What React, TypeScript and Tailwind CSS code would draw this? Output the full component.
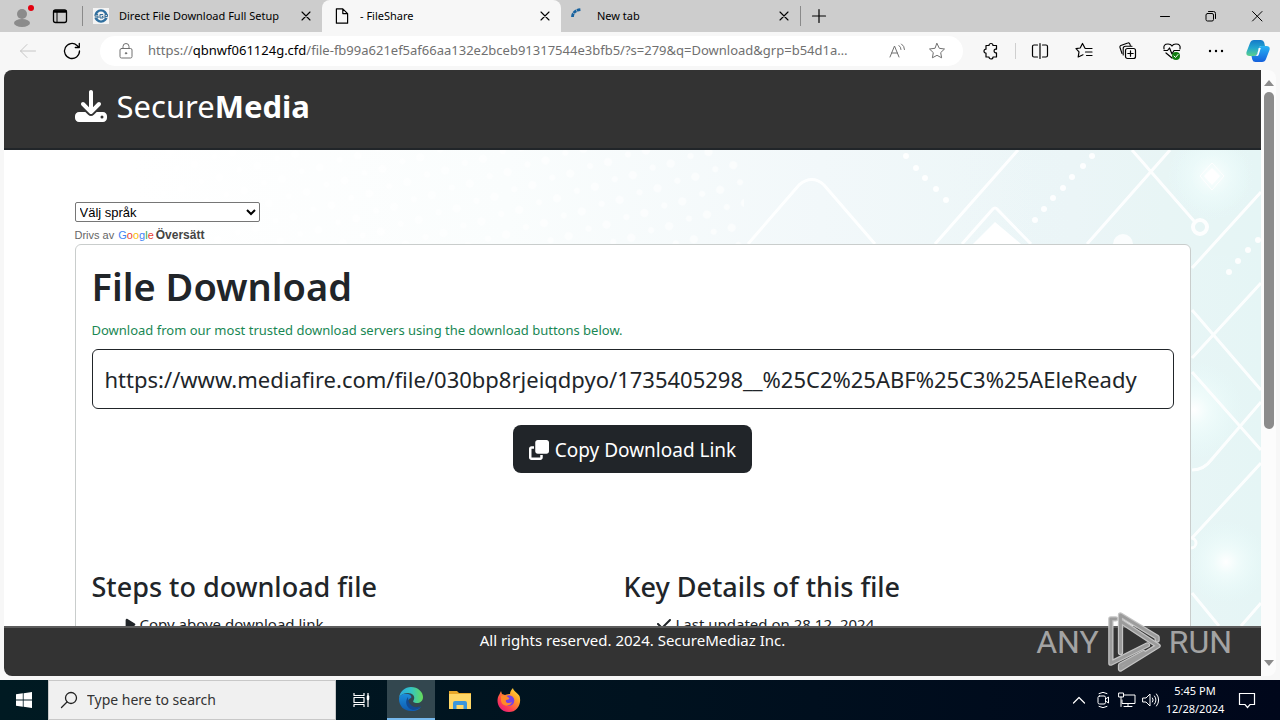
import { useState, type ReactNode } from "react";
import { FaCheck, FaClone, FaDownload, FaPlay } from "react-icons/fa6";

const FILE_URL =
  "https://www.mediafire.com/file/030bp8rjeiqdpyo/1735405298__%25C2%25ABF%25C3%25AEleReady";

const ADDRESS = {
  scheme: "https://",
  host: "qbnwf061124g.cfd",
  path: "/file-fb99a621ef5af66aa132e2bceb91317544e3bfb5/?s=279&q=Download&grp=b54d1a7c92",
};

type IconProps = { children: ReactNode; className?: string };

function Icon({ children, className = "size-5" }: IconProps) {
  return (
    <svg
      viewBox="0 0 20 20"
      fill="none"
      stroke="currentColor"
      strokeLinecap="round"
      strokeLinejoin="round"
      className={`shrink-0 ${className}`}
      aria-hidden="true"
    >
      {children}
    </svg>
  );
}

const STAR = "M10 2.5l2.3 4.8 5.2.7-3.8 3.6.9 5.2-4.6-2.5-4.6 2.5.9-5.2L2.5 8l5.2-.7z";

function CloseIcon() {
  return (
    <Icon className="size-4">
      <path d="M5 5l10 10M15 5L5 15" strokeWidth="1.4" />
    </Icon>
  );
}

function Tab({
  title,
  icon,
  active = false,
}: {
  title: string;
  icon: ReactNode;
  active?: boolean;
}) {
  return (
    <div
      className={
        active
          ? "flex h-8 w-[239px] items-center rounded-t-lg bg-[#f7f7f7] pl-3 pr-2"
          : "flex h-8 w-[239px] items-center pl-2.5 pr-2"
      }
    >
      <span className="flex w-[26px] shrink-0 items-center">{icon}</span>
      <span className="min-w-0 flex-1 truncate text-[11px]">{title}</span>
      <button type="button" aria-label={`Close ${title}`}>
        <CloseIcon />
      </button>
    </div>
  );
}

function TabStrip() {
  return (
    <div className="flex h-8 shrink-0 items-center bg-[#cdcdcd]">
      <button type="button" aria-label="Profile" className="ml-3">
        <svg viewBox="0 0 24 24" className="size-6">
          <circle cx="10" cy="10" r="5" fill="#8b8b8b" />
          <ellipse cx="10" cy="19" rx="8" ry="4" fill="#8b8b8b" />
          <circle cx="19" cy="4" r="3" fill="#e3000f" />
        </svg>
      </button>
      <button type="button" aria-label="Tab actions" className="ml-3.5">
        <Icon>
          <rect x="3.5" y="4" width="13" height="12.5" rx="2" strokeWidth="1.3" />
          <path d="M4.5 5.5h11" strokeWidth="2.6" />
          <path d="M7 6v10" />
        </Icon>
      </button>
      <div className="ml-3 h-5 w-px bg-[#8a8a8a]" />
      <div className="flex">
        <Tab
          title="Direct File Download Full Setup"
          icon={
            <svg viewBox="0 0 16 16" className="size-4">
              <rect width="16" height="16" fill="#f4f4f4" />
              <circle cx="8" cy="8" r="5.6" fill="none" stroke="#2f6f9f" strokeWidth="2.4" />
              <path d="M1 6.500h14v3.500h-14z" fill="#d9dde0" />
              <path
                d="M5 6.500H2v1.600h3V10H2M10 6.500H7V10h3V8.500H9M12 10V6.500h2.500v2H12"
                fill="none"
                stroke="#37709a"
              />
            </svg>
          }
        />
        <Tab
          active
          title="- FileShare"
          icon={
            <Icon className="size-4">
              <path d="M3 1h8l6 6v12H3zM11 1v6h6" strokeWidth="1.5" />
            </Icon>
          }
        />
        <Tab
          title="New tab"
          icon={
            <svg viewBox="0 0 16 16" className="size-4" fill="none" stroke="#17629f">
              <path d="M1.500 9C1.500 5 4.500 1.800 10 1.500" strokeWidth="2.800" strokeDasharray="3.600 .6" />
            </svg>
          }
        />
      </div>
      <div className="h-5 w-px bg-[#8a8a8a]" />
      <button type="button" aria-label="New tab" className="ml-2">
        <Icon>
          <path d="M10 3.500v13M3.500 10h13" strokeWidth="1.200" />
        </Icon>
      </button>
      <div className="ml-auto flex text-black">
        <button type="button" aria-label="Minimize" className="flex w-[46px] justify-center">
          <Icon>
            <path d="M5.500 10.500h9" />
          </Icon>
        </button>
        <button type="button" aria-label="Restore" className="flex w-[46px] justify-center">
          <Icon>
            <rect x="5" y="7.500" width="7.500" height="7.500" rx="1.500" />
            <path d="M7.500 5.500h5a2 2 0 0 1 2 2v5" />
          </Icon>
        </button>
        <button type="button" aria-label="Close window" className="flex w-[46px] justify-center">
          <Icon>
            <path d="M5.500 5.500l9.500 9.500M15 5.500L5.500 15" />
          </Icon>
        </button>
      </div>
    </div>
  );
}

function AddressBar() {
  const [editing, setEditing] = useState(false);

  return (
    <div className="ml-[18px] flex h-[30px] min-w-0 flex-1 items-center rounded-full bg-white px-4 text-[#707070]">
      <Icon>
        <rect x="4" y="7.500" width="12" height="9.500" rx="1.500" />
        <path d="M7 7.500V5.500a3 3 0 0 1 6 0v2" />
        <circle cx="10" cy="12.300" r=".7" fill="currentColor" />
      </Icon>
      {editing ? (
        <input
          autoFocus
          aria-label="Address"
          defaultValue={ADDRESS.scheme + ADDRESS.host + ADDRESS.path}
          onBlur={() => setEditing(false)}
          className="ml-3 min-w-0 flex-1 text-[13px] text-black outline-none"
        />
      ) : (
        <button
          type="button"
          aria-label="Edit address"
          onClick={() => setEditing(true)}
          className="ml-3 mr-5 min-w-0 flex-1 truncate text-left text-[13px]"
        >
          {ADDRESS.scheme}
          <span className="text-black">{ADDRESS.host}</span>
          {ADDRESS.path}
        </button>
      )}
      <button type="button" aria-label="Read aloud" className="ml-4">
        <Icon>
          <path d="M3 16L7.500 5 12 16M4.600 12h5.800M12 4.500q2 1.500 2 4M14.500 3q3 2 3 5.500" />
        </Icon>
      </button>
      <button type="button" aria-label="Add to favorites" className="ml-5">
        <Icon>
          <path d={STAR} />
        </Icon>
      </button>
    </div>
  );
}

function Toolbar() {
  return (
    <div className="flex h-[38px] shrink-0 items-center bg-[#f7f7f7] pl-[18px] pr-2.5">
      <button type="button" aria-label="Back" disabled className="text-[#c6c6c6]">
        <Icon>
          <path d="M17.500 10h-15M9 3.500L2.500 10 9 16.500" />
        </Icon>
      </button>
      <button type="button" aria-label="Refresh" className="ml-6">
        <Icon>
          <path d="M17.500 10A7.500 7.500 0 1 1 15 4.400L17 6.500M17.300 2.500v4h-4" strokeWidth="1.300" />
        </Icon>
      </button>
      <AddressBar />
      <div className="ml-[18px] flex items-center">
        <button type="button" aria-label="Extensions">
          <Icon>
            <path
              d="M5 4.500h3a2 2 0 1 1 4 0h3.500v3.700h-1a1.900 1.900 0 0 0 0 3.700h1V16H12a2 2 0 1 1-4 0H5v-3.800a2 2 0 1 1 0-4z"
              strokeWidth="1.200"
            />
          </Icon>
        </button>
        <div className="mx-3.5 h-4 w-px bg-[#cfcfcf]" />
        <button type="button" aria-label="Split screen">
          <Icon>
            <path d="M7.500 4H4a1.500 1.500 0 0 0-1.500 1.500v9A1.500 1.500 0 0 0 4 16h3.500M12.500 4H16a1.500 1.500 0 0 1 1.500 1.500v9A1.500 1.500 0 0 1 16 16h-3.500M10 2.500v15" strokeWidth="1.200" />
          </Icon>
        </button>
        <button type="button" aria-label="Favorites" className="ml-6">
          <Icon>
            <path
              d="M11 7.200L8.500 2.500 6.200 7 2 7.600l3 3.200-.8 5.200L9 13.800M11.500 7.500H18M11.500 11H18M12.500 14.500H18"
              strokeWidth="1.200"
            />
          </Icon>
        </button>
        <button type="button" aria-label="Collections" className="ml-6">
          <Icon>
            <path d="M4 12.500L2 6.500a1.500 1.500 0 0 1 .8-2l7-2.500a1.500 1.500 0 0 1 2 .9l.5 1.600" strokeWidth="1.100" />
            <rect x="7.500" y="7.500" width="10" height="10" rx="2" strokeWidth="1.200" />
            <path d="M12.500 9.800v5.400M9.800 12.500h5.400" strokeWidth="1.200" />
            <path d="M5.200 14V7.500q0-2.300 2.300-2.300H14" strokeWidth="1.100" />
          </Icon>
        </button>
        <button type="button" aria-label="Browser essentials" className="ml-6">
          <Icon>
            <path d="M2 8q-1-5 4-5 3 0 4 2 1-2 4-2 5 0 4 5M2 9.500h3.500L7.500 7l2.500 6 2-3.500h5.500M4 12l6 5" strokeWidth="1.200" />
            <circle cx="14" cy="15" r="4" fill="#107c10" stroke="none" />
            <path d="M12 15l1.500 1.500 2.500-3" stroke="#fff" />
          </Icon>
        </button>
        <button type="button" aria-label="Settings and more" className="ml-6">
          <Icon>
            <path d="M4 10h.01M10 10h.01M16 10h.01" strokeWidth="2.400" />
          </Icon>
        </button>
        <button type="button" aria-label="Copilot" className="ml-5">
          <svg viewBox="0 0 24 24" className="size-6">
            <defs>
              <linearGradient id="pilotA" x1="0" y1="0" x2="0" y2="1">
                <stop offset="0" stopColor="#1479c9" />
                <stop offset=".5" stopColor="#23a6cf" />
                <stop offset="1" stopColor="#5bd08b" />
              </linearGradient>
              <linearGradient id="pilotB" x1="0" y1="0" x2="0" y2="1">
                <stop offset="0" stopColor="#28b4f4" />
                <stop offset="1" stopColor="#1560dc" />
              </linearGradient>
            </defs>
            <path d="M8 1h7q2.500 0 3.200 2.500L19 7h-3.500q-2 0-2.600 2l-1.600 5.500Q10.300 17 8 17H3.500Q-.3 17 .5 13L4 4q1-3 4-3z" fill="url(#pilotA)" />
            <path d="M16 23H9.500Q7 23 6.300 20.500L5.500 17H8q2.500 0 3.200-2.500L12.900 9q.6-2 2.600-2h5q4 0 3 4l-3.500 9q-1 3-4 3z" fill="url(#pilotB)" />
            <path d="M12.800 9h2l-2 6.500q-.5 1.500-2 1.500h-1q1.200-.8 1.500-2z" fill="#fff" />
          </svg>
        </button>
      </div>
    </div>
  );
}

const TRAIL_DOTS = [
  [902, 6], [912, 18], [921, 28], [932, 39], [942, 50],
  [1088, 6], [1079, 16], [1068, 27], [1059, 38], [1049, 48], [1040, 59], [1031, 70],
  [1254, 90], [1244, 100], [1234, 111], [1225, 122],
];

function Backdrop() {
  return (
    <svg
      viewBox="0 0 1257 476"
      preserveAspectRatio="xMaxYMin slice"
      className="absolute inset-0 size-full"
      aria-hidden="true"
    >
      <defs>
        <linearGradient id="wash">
          <stop offset=".1" stopColor="#ffffff" />
          <stop offset=".4" stopColor="#fafdfd" />
          <stop offset=".65" stopColor="#f2f8fa" />
          <stop offset=".85" stopColor="#ebf6f7" />
          <stop offset="1" stopColor="#e5f5f5" />
        </linearGradient>
        <radialGradient id="glow">
          <stop offset="0" stopColor="#ffffff" />
          <stop offset=".3" stopColor="#f2fdfc" stopOpacity=".8" />
          <stop offset="1" stopColor="#e6fbfa" stopOpacity="0" />
        </radialGradient>
        <pattern id="specks" width="28" height="28" patternUnits="userSpaceOnUse" patternTransform="rotate(28)">
          <circle cx="7" cy="7" r="4" fill="#fff" />
          <circle cx="21" cy="19" r="3" fill="#fff" />
        </pattern>
      </defs>
      <rect width="1257" height="476" fill="url(#wash)" />
      <rect x="150" width="590" height="100" fill="url(#specks)" opacity=".6" />
      <circle cx="1208" cy="26" r="45" fill="url(#glow)" />
      <circle cx="1190" cy="260" r="50" fill="url(#glow)" />
      <circle cx="1222" cy="412" r="42" fill="url(#glow)" />
      <g fill="none" stroke="#fff" strokeWidth="3" opacity=".9">
        <path d="M744 94L795 35Q808 24 820 35L871 94" />
        <path d="M1014 0L931 94M1166 0L1083 94M1128 0L1190 71" />
        <path d="M958 94L988 60Q991 56 994 60L1027 94" />
        <path d="M1257 42L1188 118M1257 133L1188 208M1188 160L1257 240" />
        <path d="M1188 222L1257 300M1257 252L1208 309Q1200 320 1188 320" />
        <path d="M1257 313L1188 388M1188 443L1215 476M1257 453L1237 476" />
        <circle cx="1196" cy="77" r="7" strokeWidth="4" />
        <circle cx="1187" cy="393" r="5" />
      </g>
      <path d="M969 94L991 72L1017 94z" fill="#fff" />
      <path d="M1208 13L1220 26L1208 40L1196 26z" fill="none" stroke="#fff" />
      <path d="M1208 18L1216 26L1208 35L1200 26z" fill="#fff" />
      <circle cx="1119" cy="94" r="10" fill="#fff" opacity=".8" />
      {TRAIL_DOTS.map(([x, y]) => (
        <circle key={`${x}-${y}`} cx={x} cy={y} r="3" fill="#fff" opacity=".9" />
      ))}
    </svg>
  );
}

function FileCard() {
  return (
    <div className="rounded-md border border-[#c9cdcc] bg-white px-4 pt-4">
      <h1 className="text-[38px]/[50px] font-semibold">File Download</h1>
      <p className="mt-2 text-[13px]/[22px] text-[#198754]">
        Download from our most trusted download servers using the download buttons below.
      </p>
      <input
        readOnly
        aria-label="Download link"
        value={FILE_URL}
        className="mt-2 h-[60px] w-full rounded-md border border-[#212529] px-3 text-[22px] outline-none"
      />
      <div className="mt-4 flex justify-center">
        <button
          type="button"
          onClick={() => navigator.clipboard.writeText(FILE_URL)}
          className="flex h-12 items-center gap-1.5 rounded-lg bg-[#212529] px-4 pt-0.5 text-[19px] text-white"
        >
          <FaClone className="size-5" />
          Copy Download Link
        </button>
      </div>
      <div className="mr-[18px] mt-[97px] grid grid-cols-2">
        <section>
          <h2 className="text-[27px]/[34px] font-medium">Steps to download file</h2>
          <ul className="mt-2 pl-8 text-[15px]/6">
            <li className="flex items-center gap-[3px]">
              <FaPlay className="size-[13px]" />
              Copy above download link
            </li>
          </ul>
        </section>
        <section>
          <h2 className="text-[27px]/[34px] font-medium">Key Details of this file</h2>
          <ul className="mt-2 pl-8 text-[15px]/6">
            <li className="flex items-center gap-1">
              <FaCheck className="size-4" />
              Last updated on 28.12. 2024
            </li>
          </ul>
        </section>
      </div>
    </div>
  );
}

function Page() {
  return (
    <div className="flex min-w-0 flex-1 flex-col text-[#212529]">
      <header className="h-20 shrink-0 border-b-2 border-[#212529] bg-[#333]">
        <div className="mx-auto max-w-[1140px] px-3 pt-3">
          <a href="#" className="flex h-12 w-fit items-center gap-2.5 text-[31px] text-white">
            <FaDownload className="size-8" />
            <span>
              Secure<b>Media</b>
            </span>
          </a>
        </div>
      </header>
      <main className="relative min-h-0 flex-1 overflow-hidden">
        <Backdrop />
        <div className="relative mx-auto max-w-[1140px] px-3 pt-[52px]">
          <select
            aria-label="Välj språk"
            className="block h-5 w-[185px] rounded-xs border border-[#767676] bg-white font-['Liberation_Sans',sans-serif] text-[13px] text-black"
          >
            <option>Välj språk</option>
          </select>
          <div className="flex h-[22px] items-center gap-1 pt-1 font-['Liberation_Sans',sans-serif] text-[11px] text-[#666]">
            Drivs av
            <a href="#" className="flex items-center gap-0.5 text-xs font-bold text-[#444]">
              <span className="text-[11px] font-medium">
                <span className="text-[#4285f4]">G</span>
                <span className="text-[#ea4335]">o</span>
                <span className="text-[#fbbc05]">o</span>
                <span className="text-[#4285f4]">g</span>
                <span className="text-[#34a853]">l</span>
                <span className="text-[#ea4335]">e</span>
              </span>
              Översätt
            </a>
          </div>
          <FileCard />
        </div>
      </main>
      <footer className="h-[50px] shrink-0 border-t-2 border-[#5c5c5c] bg-[#333] text-center text-[15px]/[25px] text-white">
        All rights reserved. 2024. SecureMediaz Inc.
      </footer>
    </div>
  );
}

function Scrollbar() {
  return (
    <div className="flex w-[15px] shrink-0 flex-col items-center bg-[#fcfcfc] py-2" aria-hidden="true">
      <svg viewBox="0 0 10 10" className="size-2.5 shrink-0" fill="#8b8b8b">
        <path d="M5 2l5 6H0z" />
      </svg>
      <div className="my-1 flex w-2.5 flex-1 flex-col">
        <div className="h-[60%] rounded-full bg-[#8b8b8b]" />
      </div>
      <svg viewBox="0 0 10 10" className="size-2.5 shrink-0" fill="#8b8b8b">
        <path d="M5 8l5-6H0z" />
      </svg>
    </div>
  );
}

function Watermark() {
  return (
    <div
      className="pointer-events-none absolute bottom-[46px] right-12 flex h-16 items-center gap-2 font-['Roboto',sans-serif] text-[32px] text-[#a3a3a3]"
      aria-hidden="true"
    >
      <span>ANY</span>
      <svg viewBox="0 0 56 64" className="h-16 w-[54px]" fill="none" strokeLinejoin="round" strokeLinecap="round">
        <g stroke="#c4c4c4" strokeWidth="5.500">
          <path d="M14 43V4L52 27V30" />
          <path d="M9 8H4V54L42 35" />
          <path d="M15 11L53 36L14 60V56L38 43" />
        </g>
        <g stroke="#9c9c9c" strokeWidth="3">
          <path d="M14 43V4L52 27V30" />
          <path d="M9 8H4V54L42 35" />
          <path d="M15 11L53 36L14 60V56L38 43" />
        </g>
      </svg>
      <span>RUN</span>
    </div>
  );
}

function EdgeLogo() {
  return (
    <svg viewBox="0 0 24 24" className="size-6" aria-hidden="true">
      <defs>
        <linearGradient id="edgeTop">
          <stop offset="0" stopColor="#2aa9df" />
          <stop offset=".5" stopColor="#33c4c4" />
          <stop offset="1" stopColor="#66dc58" />
        </linearGradient>
        <linearGradient id="edgeSide" x1="0" y1="0" x2="0" y2="1">
          <stop offset="0" stopColor="#1b8edb" />
          <stop offset="1" stopColor="#0f5bb0" />
        </linearGradient>
      </defs>
      <path d="M0 11C1 4 6 0 12 0c7 0 12 5 12 10 0 4-3 6-6 6-3 0-4.500-1-3.500-2.500C17 9 13 6 9 6 5 6 1 8 0 11z" fill="url(#edgeTop)" />
      <path d="M0 12c0-4 5-6 9-5 3 .6 4 3 3 4-5 2-4 8 0 10 3 1.600 7 1 10-1-2 3-6 4.500-10 4C5 24 0 19 0 12z" fill="url(#edgeSide)" />
      <path d="M9 10c-4 5-1 12 5 13 3 0 6-1.500 8-4-6 3-13 0-13-9z" fill="#134a92" />
    </svg>
  );
}

function FirefoxLogo() {
  return (
    <svg viewBox="0 0 24 24" className="size-6" aria-hidden="true">
      <defs>
        <linearGradient id="fox" x1="1" y1="0" x2=".2" y2="1">
          <stop offset="0" stopColor="#fff044" />
          <stop offset=".4" stopColor="#ff9a26" />
          <stop offset=".75" stopColor="#ff4150" />
          <stop offset="1" stopColor="#e5197d" />
        </linearGradient>
      </defs>
      <path d="M4 3l1 3 3 1c2-1 4-1 5-1 0-2 1-4 3-6 0 3 5 5 6.500 8C25 16 20 24 12 24S.5 18 .5 12.500C.5 8 3 6 4 3z" fill="url(#fox)" />
      <circle cx="12" cy="12.500" r="5.300" fill="#7542e5" />
      <path d="M4 8c4-1 6 0 8 2 1 1-1 2-3 2-1 3 3 4 6 2-2 5-10 5-11-1z" fill="#ff8a28" />
    </svg>
  );
}

function Taskbar() {
  return (
    <div className="flex h-10 shrink-0 items-center bg-linear-to-r from-[#001a22] via-[#00121f] to-[#00071b] text-white">
      <button type="button" aria-label="Start" className="flex h-10 w-12 items-center justify-center">
        <svg viewBox="0 0 16 16" className="size-4" fill="#fff">
          <path d="M0 2.300L6.800 1.300V7.500H0zM7.600 1.200L16 0V7.500H7.600zM0 8.400H6.800V14.700L0 13.700zM7.600 8.400H16V16L7.600 14.800z" />
        </svg>
      </button>
      <label className="flex h-10 w-72 items-center gap-2 border border-[#c8c8c8] bg-[#f0f0f0] pl-2.5 text-[#222]">
        <Icon>
          <circle cx="12" cy="8" r="5.500" strokeWidth="1.300" />
          <path d="M8 12L2.500 17.500" strokeWidth="1.300" />
        </Icon>
        <input
          aria-label="Search"
          placeholder="Type here to search"
          className="min-w-0 flex-1 text-sm outline-none placeholder:text-[#333]"
        />
      </label>
      <button type="button" aria-label="Task view" className="flex h-10 w-[51px] items-center justify-center">
        <Icon>
          <path d="M2 3v2.500h10V3M2 17v-2.500h10V17M2 7.500h10v5H2zM16 3v14" strokeWidth="1.200" strokeLinecap="butt" />
          <path d="M16 6.500v2.500" strokeWidth="2.500" />
        </Icon>
      </button>
      <button
        type="button"
        aria-label="Microsoft Edge"
        className="flex h-10 w-12 items-center justify-center border-b-2 border-[#76b9ed] bg-[#33474f]"
      >
        <EdgeLogo />
      </button>
      <button type="button" aria-label="File Explorer" className="flex h-10 w-[50px] items-center justify-center">
        <svg viewBox="0 0 24 24" className="size-6">
          <path d="M1 3h8l2 2h12v3H1z" fill="#e8a82a" />
          <path d="M1 6h22v15H1z" fill="#ffd767" />
          <path d="M5 21v-6q0-2 2-2h10q2 0 2 2v6h-3.500v-4h-7v4z" fill="#3a96dd" />
        </svg>
      </button>
      <button type="button" aria-label="Firefox" className="flex h-10 w-12 items-center justify-center">
        <FirefoxLogo />
      </button>
      <div className="ml-auto flex items-center gap-1">
        <button type="button" aria-label="Show hidden icons">
          <Icon>
            <path d="M4.500 13L10 7.500l5.500 5.500" strokeWidth="1.200" />
          </Icon>
        </button>
        <Icon>
          <rect x="5" y="6" width="7.500" height="8" rx="1.500" />
          <path d="M12.500 9l3-2v6l-3-2M6 3.500Q10 1 14 3.500M6 16.500q4 2.500 8 0" />
        </Icon>
        <Icon>
          <path d="M7 5h11v8.500H5V10M11 13.500v3M7 16.500h8M2 3h4.500v4H2zM4 7v9.500" strokeLinejoin="miter" />
        </Icon>
        <Icon>
          <path d="M2 8h3l4-4v12l-4-4H2zM11.500 8q1.500 2 0 4M13.500 6q3 4 0 8M15.500 4q4.500 6 0 12" />
        </Icon>
        <div className="w-[60px] text-center text-[11px]/[18px]">
          <div>5:45 PM</div>
          <div>12/28/2024</div>
        </div>
        <button type="button" aria-label="Notifications" className="ml-2 mr-[23px]">
          <Icon>
            <path d="M2.500 3.500h15v11H13l-2.500 3-2.500-3H2.500z" strokeWidth="1.200" strokeLinejoin="miter" />
          </Icon>
        </button>
      </div>
    </div>
  );
}

export default function App() {
  return (
    <div className="relative flex h-screen flex-col overflow-hidden bg-[#f7f7f7] font-['Noto_Sans',sans-serif] text-black">
      <TabStrip />
      <Toolbar />
      <div className="mx-1 mb-1 flex min-h-0 flex-1 overflow-hidden rounded-lg">
        <Page />
        <Scrollbar />
      </div>
      <Taskbar />
      <Watermark />
    </div>
  );
}
